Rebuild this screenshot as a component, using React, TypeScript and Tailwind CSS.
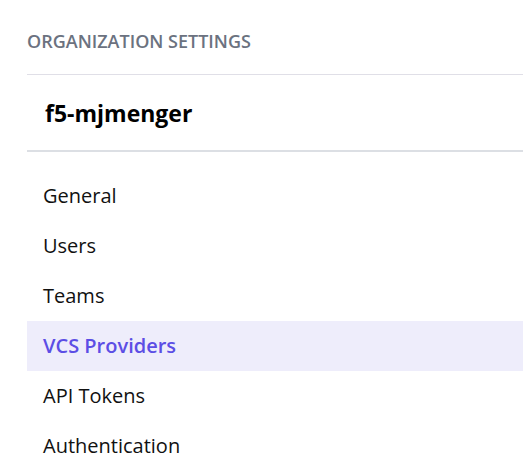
import React from 'react';

const items = ['General', 'Users', 'Teams', 'VCS Providers', 'API Tokens', 'Authentication'];

export default function App() {
  const active = 'VCS Providers';
  return (
    <div
      className="min-h-screen w-[523px] h-[456px] overflow-hidden bg-white pl-[27px]"
      style={{ fontFamily: '"Open Sans", "Noto Sans", sans-serif' }}
    >
      {/* heading */}
      <div className="pt-[29px] pb-[21px] border-b border-[#e0dfe7] text-[18px] leading-6 font-semibold text-[#6b7280] uppercase">
        Organization Settings
      </div>

      {/* org name */}
      <div className="pt-[23px] pb-[22px] pl-[18px] border-b-2 border-[#dcdfe4] text-[23px] leading-[30px] font-bold text-black">
        f5-mjmenger
      </div>

      {/* menu */}
      <nav className="pt-[19px] flex flex-col">
        {items.map((item) => (
          <div
            key={item}
            className={
              item === active
                ? 'h-[50px] pl-4 flex items-center text-[20px] font-semibold bg-[#eeedfb] text-[#5c4ee5]'
                : 'h-[50px] pl-4 flex items-center text-[20px] text-[#111111]'
            }
          >
            {item}
          </div>
        ))}
      </nav>
    </div>
  );
}
